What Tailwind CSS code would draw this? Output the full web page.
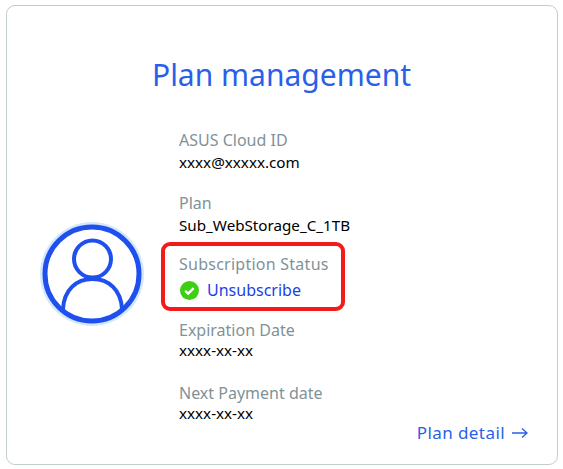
<!DOCTYPE html>
<html><head><meta charset="utf-8"><script src="https://cdn.jsdelivr.net/npm/@tailwindcss/browser@4"></script></head>
<body class="bg-white w-[563px] h-[469px] overflow-hidden font-['Noto_Sans',sans-serif]">
<div class="ml-[6px] mt-[5px] w-[552px] h-[460px] border border-[#c3cdd0] rounded-[9px] flex flex-col">
  <h1 class="text-center text-[#2a5fe8] text-[30px] leading-[40px] mt-[49px] pr-[1px]">Plan management</h1>
  <div class="flex mt-[34px]">
    <div class="w-[154px] shrink-0 flex justify-start pl-[33px] pt-[93px]">
      <svg width="104" height="104" viewBox="0 0 104 104" fill="none">
        <circle cx="52" cy="52" r="52" fill="#d3e9fb"/>
        <circle cx="52" cy="52" r="47" fill="#fff" stroke="#1f50ee" stroke-width="5"/>
        <circle cx="52.5" cy="37" r="18.5" stroke="#1f50ee" stroke-width="4"/>
        <path d="M23 87 C24 68 36 57 52.5 57 C69 57 81 68 82 87" stroke="#1f50ee" stroke-width="4"/>
      </svg>
    </div>
    <div class="flex flex-col">
      <div class="pl-[18px]">
        <p class="text-[16px] leading-[22px] text-[#7f9298]">ASUS Cloud ID</p>
        <p class="text-[15.2px] leading-[22px] text-black">xxxx@xxxxx.com</p>
        <p class="text-[16px] leading-[22px] text-[#7f9298] mt-[19px]">Plan</p>
        <p class="text-[15.2px] leading-[22px] text-black">Sub_WebStorage_C_1TB</p>
      </div>
      <div class="w-[184px] h-[69px] border-[4px] border-[#f31a1a] rounded-[9px] mt-[6px] pl-[14px] pt-[7px]">
        <p class="text-[16px] leading-[22px] text-[#7f9298] whitespace-nowrap tracking-[0.25px]">Subscription Status</p>
        <div class="flex items-center gap-[8px] mt-[3px] h-[24px] pl-[1px]">
          <svg width="19" height="19" viewBox="0 0 19 19"><circle cx="9.5" cy="9.5" r="9.5" fill="#3ccf14"/><path d="M5.2 9.8 L8.2 12.6 L13.6 7.2" fill="none" stroke="#fff" stroke-width="2.4"/></svg>
          <span class="text-[16px] leading-[24px] text-[#1c3fe6]">Unsubscribe</span>
        </div>
      </div>
      <div class="pl-[18px] mt-[8px]">
        <p class="text-[16px] leading-[22px] text-[#7f9298]">Expiration Date</p>
        <p class="text-[15.2px] leading-[20px] text-black -mt-[1px]">xxxx-xx-xx</p>
        <p class="text-[16px] leading-[22px] text-[#7f9298] mt-[22px]">Next Payment date</p>
        <p class="text-[15.2px] leading-[20px] text-black -mt-[1px]">xxxx-xx-xx</p>
      </div>
    </div>
  </div>
  <div class="flex justify-end items-center gap-[7px] pr-[29px] -mt-[1px]">
    <span class="text-[17px] leading-[22px] text-[#2a5fe8] tracking-[0.42px]">Plan detail</span>
    <svg width="16" height="12" viewBox="0 0 16 12" fill="none" stroke="#2a5fe8" stroke-width="1.3"><path d="M0 6 H15 M10 1.5 L15 6 L10 10.5"/></svg>
  </div>
</div>
</body></html>
